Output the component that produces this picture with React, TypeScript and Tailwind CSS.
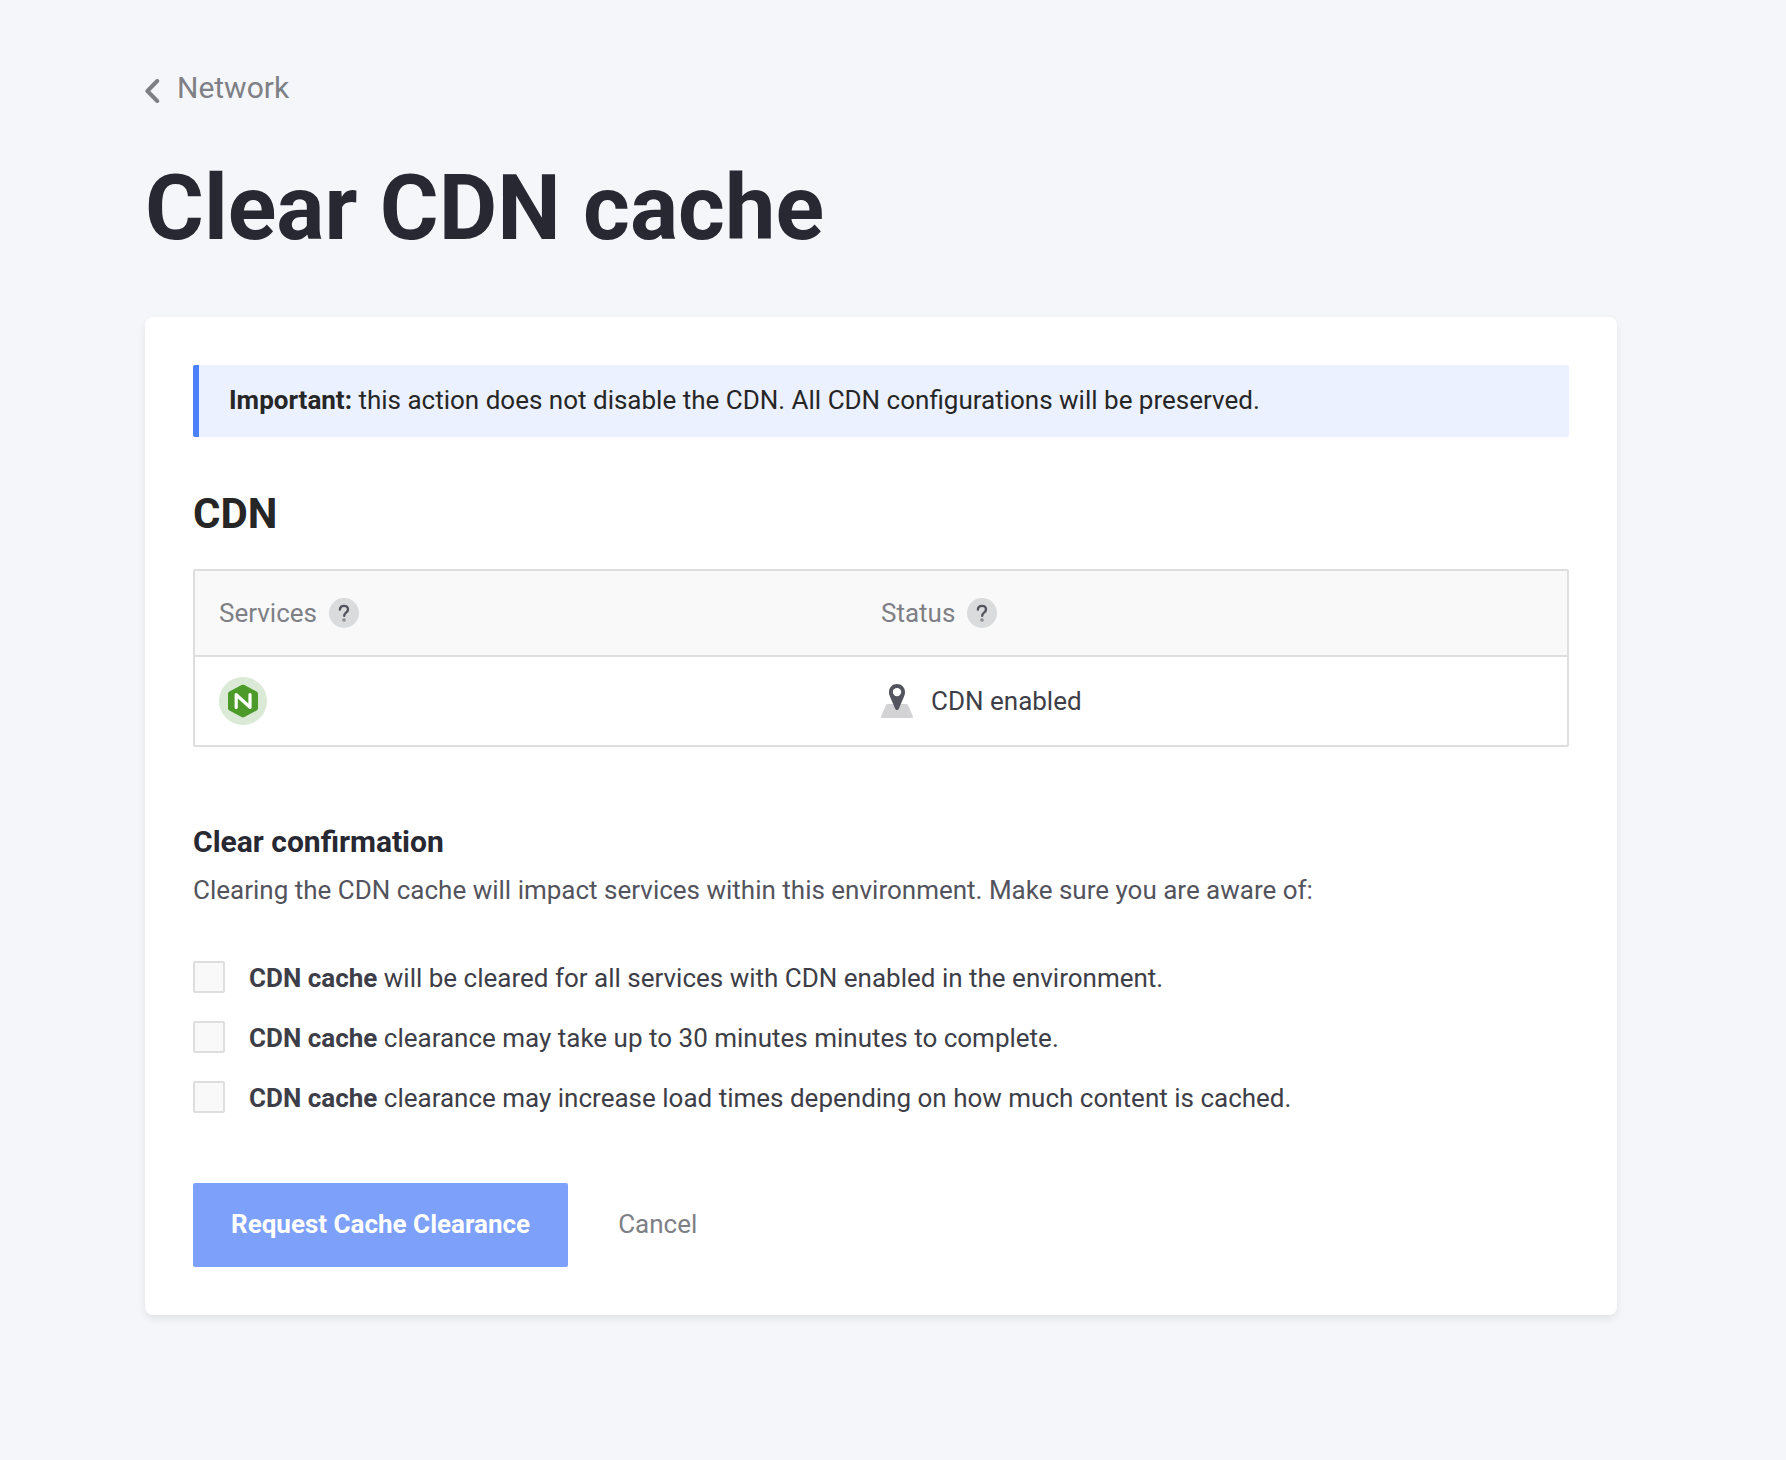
import React from "react";

function HelpIcon({ label }: { label: string }) {
  return (
    <button type="button" aria-label={label} className="size-[30px] shrink-0 rounded-full">
      <svg viewBox="0 0 30 30" className="block size-full" fill="none" aria-hidden="true">
        <circle cx="15" cy="15" r="15" fill="#dadbdd" />
        <path
          d="M10.9 11.6C11 9.3 12.6 7.9 15 7.9c2.4 0 4 1.4 4 3.5 0 1.4-.7 2.2-2 3.2-1.300 1-1.800 1.600-1.800 3.100"
          stroke="#53545d"
          strokeWidth="2.400"
          strokeLinecap="round"
        />
        <circle cx="15" cy="22" r="1.800" fill="#8b8c92" />
      </svg>
    </button>
  );
}

function NginxIcon() {
  return (
    <svg viewBox="0 0 48 48" className="block size-12" role="img" aria-label="Nginx">
      <circle cx="24" cy="24" r="24" fill="#dbead6" />
      <path
        d="M22.600 8c.9-.5 1.900-.5 2.800 0l12.200 6.500c.9.500 1.400 1.300 1.400 2.300v14.400c0 1-.5 1.800-1.400 2.300L25.400 40c-.9.500-1.900.500-2.800 0l-12.200-6.500C9.500 33 9 32.200 9 31.200V16.800c0-1 .5-1.800 1.400-2.300z"
        fill="#4c9a2a"
      />
      <path
        d="M17.200 30.500V17.700L31 30.300V17.500"
        fill="none"
        stroke="#fff"
        strokeWidth="3.200"
        strokeLinecap="round"
        strokeLinejoin="round"
      />
    </svg>
  );
}

function LocationIcon() {
  return (
    <svg viewBox="0 0 32 34" className="block h-[34px] w-8 shrink-0" aria-hidden="true">
      <path
        d="M6.700 20h18.600c.8 0 1.400.4 1.700 1.100l4.800 11c.4 1-.1 1.900-1.200 1.900H1.400C.3 34-.2 33.100.2 32.100l4.800-11c.3-.7.9-1.100 1.700-1.100z"
        fill="#d3d3d5"
      />
      <path
        d="M16 0c4.500 0 8 3.500 8 7.900 0 2.200-.8 4.400-1.700 6.400l-4.500 10.400c-.7 1.700-2.900 1.700-3.600 0L9.700 14.300C8.800 12.300 8 10.100 8 7.900 8 3.500 11.500 0 16 0z"
        fill="#53545d"
      />
      <circle cx="16" cy="8.100" r="4.200" fill="#fff" />
    </svg>
  );
}

const confirmations = [
  { id: "scope", text: "will be cleared for all services with CDN enabled in the environment." },
  { id: "duration", text: "clearance may take up to 30 minutes minutes to complete." },
  { id: "load", text: "clearance may increase load times depending on how much content is cached." },
];

export default function App() {
  return (
    <main className="min-h-screen bg-[#f4f6fa] pt-[68px] pr-[169px] pb-36 pl-[145px] font-['Roboto',sans-serif] text-[26px] leading-10 text-[#3d3e47]">
      <nav className="flex">
        <a href="#network" className="flex items-center gap-4 text-[30px] text-[#7e8086]">
          <svg viewBox="0 0 16 24" className="mt-1.5 h-6 w-4" fill="none" aria-hidden="true">
            <path
              d="M12.200 2 2.400 12l9.800 10"
              stroke="currentColor"
              strokeWidth="4"
              strokeLinecap="round"
              strokeLinejoin="round"
            />
          </svg>
          Network
        </a>
      </nav>

      <h1 className="mt-[49px] text-[90px] leading-[104px] font-bold text-[#282832]">Clear CDN cache</h1>

      <section className="mt-14 rounded-lg bg-white p-12 shadow-[0_4px_8px_rgba(0,0,0,0.08)]">
        <p className="rounded-[2px] border-l-6 border-[#4b80fb] bg-[#ebf1fe] px-[30px] pt-[15px] pb-[17px] text-[#262626]">
          <strong className="font-bold">Important:</strong> this action does not disable the CDN. All CDN
          configurations will be preserved.
        </p>

        <h2 className="mt-13 text-[42px] leading-[50px] font-bold text-[#262626]">CDN</h2>

        <div className="mt-[30px] rounded-[2px] border-2 border-[#dedede]">
          <table className="w-full table-fixed border-collapse text-left">
            <thead className="border-b-2 border-[#dedede] bg-[#f9f9f9] text-[#7e8086]">
              <tr>
                <th scope="col" className="h-[85px] pl-6 font-normal">
                  <div className="flex items-center gap-3">
                    Services
                    <HelpIcon label="About services" />
                  </div>
                </th>
                <th scope="col" className="pr-6 font-normal">
                  <div className="flex items-center gap-3">
                    Status
                    <HelpIcon label="About status" />
                  </div>
                </th>
              </tr>
            </thead>
            <tbody>
              <tr>
                <td className="h-[89px] pl-6">
                  <NginxIcon />
                </td>
                <td className="pr-6">
                  <div className="flex items-center gap-[18px]">
                    <LocationIcon />
                    CDN enabled
                  </div>
                </td>
              </tr>
            </tbody>
          </table>
        </div>

        <h3 className="mt-[75px] text-[30px] font-bold text-[#282832]">Clear confirmation</h3>
        <p className="mt-2 text-[#53545d]">
          Clearing the CDN cache will impact services within this environment. Make sure you are aware of:
        </p>

        <form>
          <div className="mt-[51px] flex flex-col gap-[26px]">
            {confirmations.map(({ id, text }) => (
              <label key={id} htmlFor={id} className="flex gap-6 leading-[34px]">
                <input
                  id={id}
                  type="checkbox"
                  className="size-8 shrink-0 appearance-none rounded-[2px] border-2 border-[#dedede] bg-[#f9f9f9] checked:bg-[#4b80fb]"
                />
                <span>
                  <strong className="font-bold">CDN cache</strong> {text}
                </span>
              </label>
            ))}
          </div>

          <div className="mt-[68px] flex items-center gap-[50px]">
            <button
              type="submit"
              disabled
              className="rounded-[2px] bg-[#7da0fb] px-[38px] pt-[21px] pb-[23px] font-bold text-white"
            >
              Request Cache Clearance
            </button>
            <button type="button" className="pt-[21px] pb-[23px] text-[#7e8086]">
              Cancel
            </button>
          </div>
        </form>
      </section>
    </main>
  );
}
